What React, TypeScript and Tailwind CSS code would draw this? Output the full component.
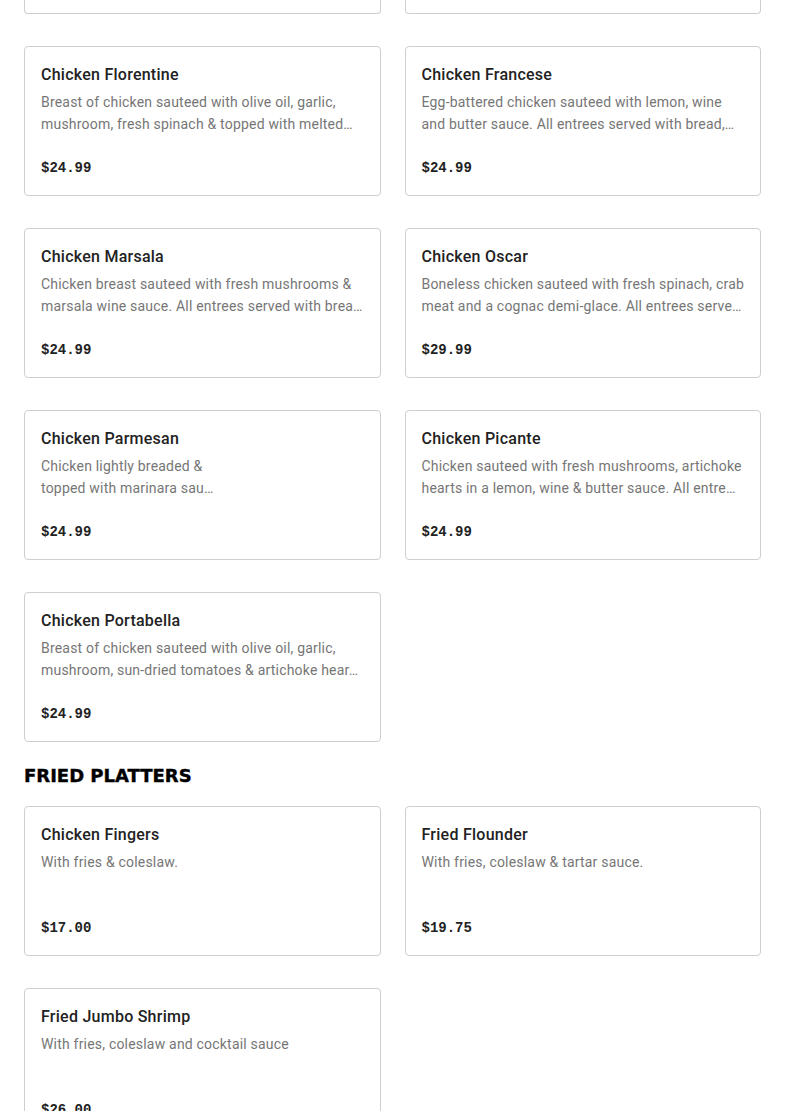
const chicken = [
  { name: "Chicken Florentine", lines: ["Breast of chicken sauteed with olive oil, garlic,", "mushroom, fresh spinach & topped with melted…"], price: "$24.99" },
  { name: "Chicken Francese", lines: ["Egg-battered chicken sauteed with lemon, wine", "and butter sauce. All entrees served with bread,…"], price: "$24.99" },
  { name: "Chicken Marsala", lines: ["Chicken breast sauteed with fresh mushrooms &", "marsala wine sauce. All entrees served with brea…"], price: "$24.99" },
  { name: "Chicken Oscar", lines: ["Boneless chicken sauteed with fresh spinach, crab", "meat and a cognac demi-glace. All entrees serve…"], price: "$29.99" },
  { name: "Chicken Parmesan", lines: ["Chicken lightly breaded &", "topped with marinara sau…"], price: "$24.99" },
  { name: "Chicken Picante", lines: ["Chicken sauteed with fresh mushrooms, artichoke", "hearts in a lemon, wine & butter sauce. All entre…"], price: "$24.99" },
  { name: "Chicken Portabella", lines: ["Breast of chicken sauteed with olive oil, garlic,", "mushroom, sun-dried tomatoes & artichoke hear…"], price: "$24.99" },
]

const fried = [
  { name: "Chicken Fingers", lines: ["With fries & coleslaw."], price: "$17.00" },
  { name: "Fried Flounder", lines: ["With fries, coleslaw & tartar sauce."], price: "$19.75" },
  { name: "Fried Jumbo Shrimp", lines: ["With fries, coleslaw and cocktail sauce"], price: "$26.00" },
]

type Item = { name: string; lines: string[]; price: string }

const Card = ({ item }: { item: Item }) => {
  return (
    <div className="flex flex-col h-[150px] border border-[#cfcfcf] rounded-[4px] bg-white px-4 pt-4 pb-4">
      <div className="text-[16px] leading-6 font-medium tracking-[0.25px] text-[#222222]">{item.name}</div>
      <div className="mt-1 h-[44px] text-[14px] leading-[22px] tracking-[0.2px] text-[#767676]">
        {item.lines.map((line) => (
          <div key={line} className="whitespace-nowrap">{line}</div>
        ))}
      </div>
      <div className="mt-[22px] text-[14px] leading-[22px] font-bold text-[#222222] font-['Liberation_Mono',monospace]">
        {item.price}
      </div>
    </div>
  )
}

export default function App() {
  return (
    <div className="bg-white min-h-screen overflow-hidden font-['Roboto',sans-serif]">
      <div className="px-6">
        {/* bottom of the row above, scrolled out of view */}
        <div className="grid grid-cols-2 gap-x-6 mb-8">
          <div className="h-[14px] border border-t-0 border-[#cfcfcf] rounded-b-[4px]" />
          <div className="h-[14px] border border-t-0 border-[#cfcfcf] rounded-b-[4px]" />
        </div>
        <div className="grid grid-cols-2 gap-x-6 gap-y-8">
          {chicken.map((item) => <Card key={item.name} item={item} />)}
        </div>
        <h2 className="mt-[22px] mb-[18px] text-[18px] leading-6 font-bold text-black font-['DejaVu_Sans',sans-serif] [-webkit-text-stroke:0.4px_black]">
          FRIED PLATTERS
        </h2>
        <div className="grid grid-cols-2 gap-x-6 gap-y-8">
          {fried.map((item) => <Card key={item.name} item={item} />)}
        </div>
      </div>
    </div>
  )
}
